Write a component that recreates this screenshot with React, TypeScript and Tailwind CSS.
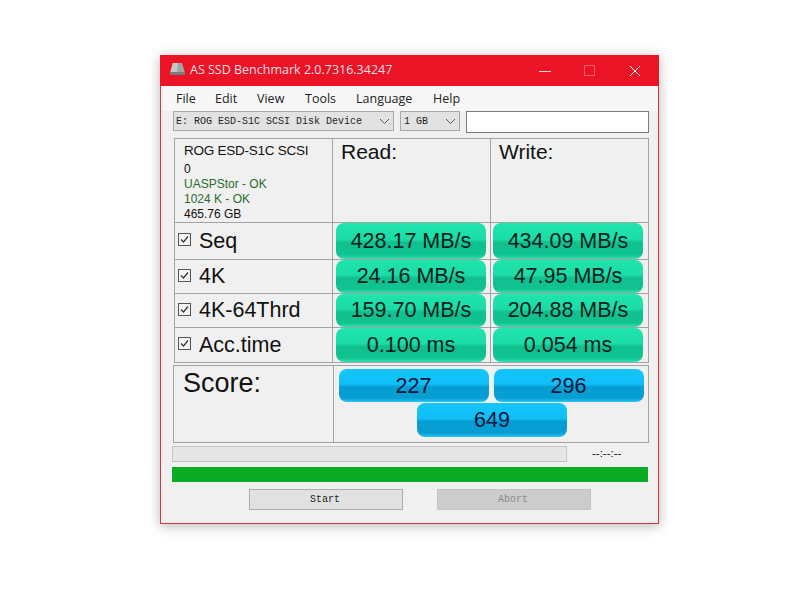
const MENU = [
  { label: "File", w: "w-[39px]" },
  { label: "Edit", w: "w-[42px]" },
  { label: "View", w: "w-[48px]" },
  { label: "Tools", w: "w-[51px]" },
  { label: "Language", w: "w-[77px]" },
  { label: "Help", w: "w-[40px]" },
];

const RESULTS = [
  { label: "Seq", read: "428.17 MB/s", write: "434.09 MB/s" },
  { label: "4K", read: "24.16 MB/s", write: "47.95 MB/s" },
  { label: "4K-64Thrd", read: "159.70 MB/s", write: "204.88 MB/s" },
  { label: "Acc.time", read: "0.100 ms", write: "0.054 ms" },
];

function Chevron() {
  return (
    <svg width="11" height="7" viewBox="0 0 11 7" fill="none" stroke="#555" strokeWidth="1">
      <path d="M1 1l4.5 4.5L10 1" />
    </svg>
  );
}

function DriveIcon() {
  return (
    <svg width="17" height="14" viewBox="0 0 17 14">
      <path d="M4 1h9l3 10H1z" fill="#a3a3a3" />
      <path d="M4 1h5l-1 10H1z" fill="#c6c6c6" />
      <rect x="1" y="10" width="15" height="3" fill="#7a7a7a" />
    </svg>
  );
}

function Check() {
  return (
    <span className="w-[13px] h-[13px] mb-[3px] border border-[#555] bg-[#f4f4f4] flex items-center justify-center shrink-0">
      <svg width="9" height="9" viewBox="0 0 9 9" fill="none" stroke="#333" strokeWidth="1.2">
        <path d="M1 4.5l2.5 2.5L8 1.5" />
      </svg>
    </span>
  );
}

function Pill({ text }: { text: string }) {
  return (
    <div className="w-[150px] h-full rounded-[8px] flex items-center justify-center text-[21.5px] text-[#06201c] bg-[linear-gradient(#20e4ad_0%,#1bdca6_46%,#10c08f_54%,#10c391_88%,#2fe3b2_100%)]">
      {text}
    </div>
  );
}

function BluePill({ text }: { text: string }) {
  return (
    <div className="w-[150px] h-full rounded-[8px] flex items-center justify-center pt-px text-[21.5px] text-[#06153a] bg-[linear-gradient(#14c6fc_0%,#10bef6_46%,#069dd2_54%,#069fd4_88%,#2ac4f4_100%)]">
      {text}
    </div>
  );
}

export default function App() {
  return (
    <div className="w-[810px] h-[589px] bg-white pl-[160px] pt-[55px] font-['Liberation_Sans',sans-serif] text-[#111]">
      <div className="w-[499px] h-[469px] bg-[#f0f0f0] border border-[#e0303f] border-t-0 shadow-[0_2px_12px_rgba(0,0,0,0.28)] flex flex-col">
        {/* title bar */}
        <div className="h-[31px] -mx-px bg-[#ea1426] flex items-center shrink-0 text-[#ffdfe2]">
          <div className="ml-[9px] mb-[3px]">
            <DriveIcon />
          </div>
          <span className="ml-[4px] text-[12.5px] font-['Open_Sans',sans-serif]">AS SSD Benchmark 2.0.7316.34247</span>
          <div className="ml-auto flex items-center">
            <svg width="12" height="12" viewBox="0 0 12 12" stroke="#ffd9dc" className="mr-[33px]">
              <path d="M0 6.5h12" />
            </svg>
            <svg width="11" height="11" viewBox="0 0 11 11" fill="none" stroke="#f4606c" className="mr-[34px]">
              <rect x="0.5" y="0.5" width="10" height="10" />
            </svg>
            <svg width="12" height="12" viewBox="0 0 12 12" stroke="#fff" className="mr-[18px]">
              <path d="M1 1l10 10M11 1L1 11" />
            </svg>
          </div>
        </div>

        {/* menu */}
        <div className="h-[25px] bg-[#f7f7f7] flex items-center pl-[15px] pt-[2px] shrink-0 text-[12.5px] font-['Open_Sans',sans-serif] text-[#222]">
          {MENU.map(({ label, w }) => (
            <span key={label} className={w}>
              {label}
            </span>
          ))}
        </div>

        {/* toolbar */}
        <div className="flex items-start pl-[12px] h-[27px] shrink-0 font-['Liberation_Mono',monospace] text-[10px] text-[#222]">
          <div className="w-[221px] h-[20px] border border-[#a8a8a8] bg-[#e2e2e2] flex items-center justify-between pl-[2px] pr-[3px]">
            <span>E: ROG ESD-S1C SCSI Disk Device</span>
            <Chevron />
          </div>
          <div className="ml-[6px] w-[60px] h-[20px] border border-[#a8a8a8] bg-[#e2e2e2] flex items-center justify-between pl-[3px] pr-[3px]">
            <span>1 GB</span>
            <Chevron />
          </div>
          <div className="ml-[6px] w-[183px] h-[22px] border border-[#7a7a7a] bg-white" />
        </div>

        {/* results table */}
        <div className="ml-[13px] w-[475px] grid grid-cols-[157px_157px_157px] grid-rows-[83px_36px_33px_33px_34px] gap-px p-px bg-[#a3a3a3] shrink-0">
          <div className="bg-[#f0f0f0] pl-[9px] pt-[2px] text-[12px] leading-[15px]">
            <div className="text-[13.5px] leading-[19px] mb-[2px] tracking-[-0.25px]">ROG ESD-S1C SCSI</div>
            <div>0</div>
            <div className="text-[#2a6b2a]">UASPStor - OK</div>
            <div className="text-[#2a6b2a]">1024 K - OK</div>
            <div>465.76 GB</div>
          </div>
          <div className="bg-[#f0f0f0] pl-[8px] pt-[1px] text-[21px] leading-[24px]">Read:</div>
          <div className="bg-[#f0f0f0] pl-[8px] pt-[1px] text-[21px] leading-[24px]">Write:</div>
          {RESULTS.map(({ label, read, write }) => (
            <div key={label} className="contents">
              <div className="bg-[#f0f0f0] flex items-center gap-[8px] pl-[3px] text-[21.5px]">
                <Check />
                <span>{label}</span>
              </div>
              <div className="bg-[#f0f0f0] pl-[3px]">
                <Pill text={read} />
              </div>
              <div className="bg-[#f0f0f0] pl-[2px]">
                <Pill text={write} />
              </div>
            </div>
          ))}
        </div>

        {/* score table */}
        <div className="mt-[2px] ml-[12px] w-[476px] h-[78px] border border-[#a3a3a3] flex shrink-0">
          <div className="w-[160px] border-r border-[#a3a3a3] pl-[9px] text-[27px] leading-[34px]">Score:</div>
          <div className="flex-1 flex flex-col items-center pt-[3px]">
            <div className="flex gap-[5px] h-[33px]">
              <BluePill text="227" />
              <BluePill text="296" />
            </div>
            <div className="h-[34px] mt-px ml-[2px]">
              <BluePill text="649" />
            </div>
          </div>
        </div>

        {/* progress */}
        <div className="mt-[3px] ml-[11px] flex items-center h-[16px] shrink-0">
          <div className="w-[395px] h-full border border-[#c4c4c4] bg-[#e6e6e6]" />
          <span className="ml-[25px] text-[11.5px]">--:--:--</span>
        </div>
        <div className="mt-[5px] ml-[11px] w-[476px] h-[15px] bg-[#0bab26] shrink-0" />

        {/* buttons */}
        <div className="mt-[7px] flex ml-[88px] gap-[34px] font-['Liberation_Mono',monospace] text-[10px]">
          <div className="w-[154px] h-[21px] border border-[#adadad] bg-[#e1e1e1] flex items-center justify-center pr-[2px] text-[#222]">Start</div>
          <div className="w-[154px] h-[21px] border border-[#c4c4c4] bg-[#cccccc] text-[#8a8a8a] flex items-center justify-center pr-[2px]">Abort</div>
        </div>
      </div>
    </div>
  );
}
